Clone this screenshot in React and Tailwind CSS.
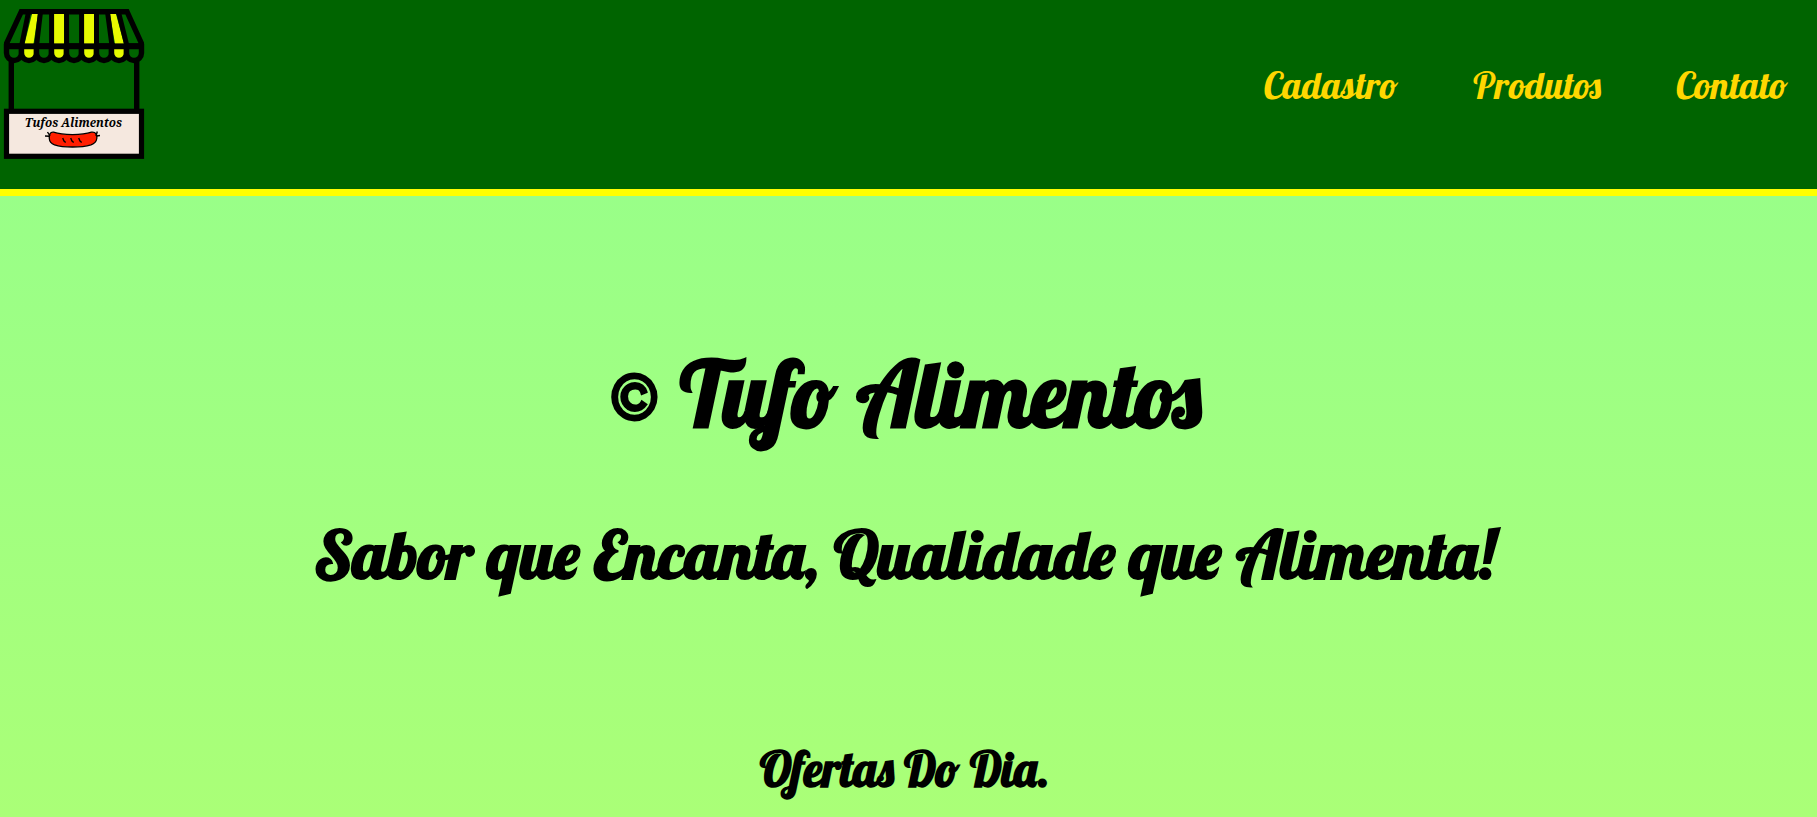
function Logo() {
  const scallops = [14, 29, 44, 59, 74, 89, 104, 119, 134];
  return (
    <svg width="160" height="168" viewBox="0 0 160 168" className="block" aria-label="Tufos Alimentos">
      <g stroke="#000" strokeWidth="5.400">
        <path d="M11.3 58V112M136.7 58V112" />
        <path d="M21.300 11.700H127L141.300 43V46H6.700V43Z" fill="#006400" />
      </g>
      <path d="M32 14H38L33.500 44H24.500ZM54 14H64V44H54ZM84 14H94V44H84ZM110 14H116L124 44H115Z" fill="#e8fa00" />
      <g stroke="#000" strokeWidth="5" fill="none">
        <path d="M28.500 12L21.500 46M40.500 12L36.500 46M51.600 12V46M66.600 12V46M81.600 12V46M96.500 12V46M107.500 12L112 46M118.500 12L127 46" />
      </g>
      {scallops.map((x, i) => (
        <path
          key={x}
          d={`M${x - 7.500} 46.500V53A7.500 7.500 0 0 0 ${x + 7.500} 53V46.500Z`}
          fill={i % 2 ? "#e8fa00" : "#006400"}
          stroke="#000"
          strokeWidth="5.400"
        />
      ))}
      <path d="M4 46.300H144" stroke="#000" strokeWidth="5.400" />
      <rect x="6.500" y="111.300" width="135" height="45" fill="#f5e8df" stroke="#000" strokeWidth="5.200" />
      <text
        x="24.800"
        y="127.300"
        textLength="97.300"
        lengthAdjust="spacingAndGlyphs"
        className="font-['Noto_Serif','DejaVu_Serif',serif] text-[12px] font-bold italic"
      >
        Tufos Alimentos
      </text>
      <path
        d="M53.500 132.200C58 133.700 65 134.600 72.500 134.600S87 133.700 91.500 132.200C96 131.600 97.300 135 96.800 138.500C96.300 142 94 143.800 91 144.800C85 146.600 79 147 72.500 147S60 146.600 54.500 144.800C51 143.600 49.500 142 49.300 138.500C49 135 50 131.800 53.500 132.200Z"
        fill="#ff1e00"
        stroke="#000"
        strokeWidth="1.300"
      />
      <path
        d="M50 136L47.500 132M49.500 136.300L45 136M96 136L97.300 131.500M96.500 136L100 135.500M62.700 138L64 141L65.700 142.500M70.700 138L72 141L73.700 142.500M78.700 138L80 141L81.700 142.500"
        stroke="#000"
        strokeWidth="1.400"
        fill="none"
      />
    </svg>
  );
}

export default function App() {
  return (
    <div className="flex h-[817px] flex-col overflow-hidden font-['Lobster',cursive] text-black">
      <header className="flex h-[196px] shrink-0 justify-between border-b-[7px] border-[#ffff00] bg-[#006400]">
        <Logo />
        <nav className="mt-[61px] mr-[29px] flex h-12 gap-[75px] text-[37.5px] leading-[48px] text-[#ffd700]">
          <a href="#cadastro">Cadastro</a>
          <a href="#produtos">Produtos</a>
          <a href="#contato">Contato</a>
        </nav>
      </header>
      <main className="flex grow flex-col items-center bg-linear-to-b from-[#99ff88] to-[#aaff77] pr-2 font-bold">
        <h1 className="mt-[138px] h-[120px] text-[90px] leading-[120px]">© Tufo Alimentos</h1>
        <h2 className="mt-[55px] h-[90px] text-[67.5px] leading-[90px]">
          Sabor que Encanta, Qualidade que Alimenta!
        </h2>
        <h3 className="mt-[138px] h-[64px] text-[48px] leading-[64px]">Ofertas Do Dia.</h3>
      </main>
    </div>
  );
}
